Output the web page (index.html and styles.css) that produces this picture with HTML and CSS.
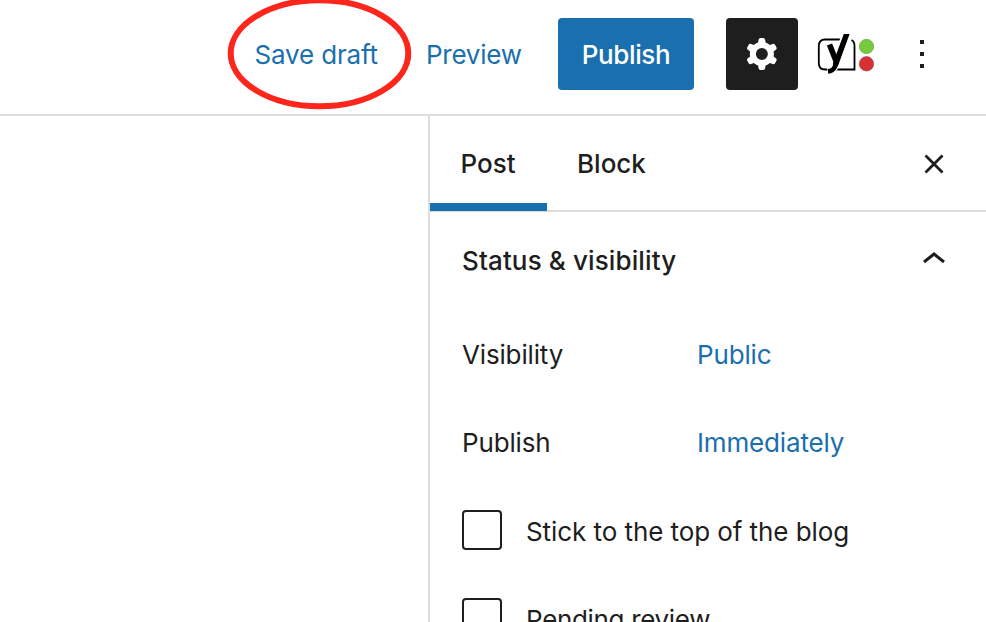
FILE: index.html
```html
<!DOCTYPE html>
<html lang="en">
<head>
<meta charset="utf-8">
<title>Edit post</title>
<link rel="stylesheet" href="styles.css">
</head>
<body>
<div class="editor">
  <header class="toolbar">
    <a class="link save">Save draft
      <svg class="highlight" width="186" height="112" viewBox="0 0 186 112"><ellipse cx="92.500" cy="55.300" rx="88.800" ry="53"/></svg>
    </a>
    <a class="link preview">Preview</a>
    <button class="publish">Publish</button>
    <button class="settings" aria-label="Settings">
      <svg width="48" height="48" viewBox="0 0 24 24"><path fill="#fff" fill-rule="evenodd" d="M10.289 4.836A1 1 0 0111.275 4h1.306a1 1 0 01.987.836l.244 1.466c.787.26 1.503.679 2.108 1.218l1.393-.522a1 1 0 011.216.437l.653 1.13a1 1 0 01-.23 1.273l-1.148.944a6.025 6.025 0 010 2.435l1.149.946a1 1 0 01.23 1.272l-.653 1.13a1 1 0 01-1.216.437l-1.394-.522c-.605.54-1.32.958-2.108 1.218l-.244 1.466a1 1 0 01-.987.836h-1.306a1 1 0 01-.986-.836l-.244-1.466a5.995 5.995 0 01-2.108-1.218l-1.394.522a1 1 0 01-1.217-.436l-.653-1.131a1 1 0 01.23-1.272l1.149-.946a6.026 6.026 0 010-2.435l-1.148-.944a1 1 0 01-.23-1.272l.653-1.131a1 1 0 011.217-.437l1.393.522a5.994 5.994 0 012.108-1.218l.244-1.466zM14.929 12a3 3 0 11-6 0 3 3 0 016 0z"/></svg>
    </button>
    <svg class="seo" width="60" height="44" viewBox="0 0 60 44">
      <path d="M25 7.500H9Q2.800 7.500 2.800 14V31Q2.800 37.500 9 37.500H38.500V14Q38.500 9.500 35.500 8" fill="none" stroke="#000" stroke-width="1.800"/>
      <path d="M30 2L19 33Q17.500 38.500 11.500 39" fill="none" stroke="#fff" stroke-width="8"/>
      <path d="M13.500 12.500L20 29" fill="none" stroke="#000" stroke-width="5.600"/>
      <path d="M27.800 2H33.600L22.500 32.500C20.200 38.500 17.400 41.600 12 41.600V37C15.500 36.800 17.300 34.500 17 31Z" fill="#000"/>
      <circle cx="50.500" cy="14.500" r="7.200" fill="#77ca3d" stroke="#629b40" stroke-width=".6"/>
      <circle cx="50.500" cy="31.800" r="7.200" fill="#d83135" stroke="#a9393b" stroke-width=".6"/>
    </svg>
    <svg class="more" width="6" height="30" viewBox="0 0 6 30" fill="#1e1e1e"><path d="M1 1h4v4H1zM1 13h4v4H1zM1 25h4v4H1z"/></svg>
  </header>
  <div class="body">
    <main class="canvas"></main>
    <aside class="sidebar">
      <nav class="tabs">
        <a class="tab active">Post</a>
        <a class="tab block">Block</a>
        <svg class="close" width="22" height="22" viewBox="0 0 22 22"><path d="M2.500 2.500L19.500 19.500M19.500 2.500L2.500 19.500"/></svg>
      </nav>
      <section class="panel">
        <h2 class="title"><span class="title-text">Status &amp; visibility</span>
          <svg class="chevron" width="24" height="14" viewBox="0 0 24 14"><path d="M2 11L12 3L22 11"/></svg>
        </h2>
        <div class="row"><span class="label visibility">Visibility</span><a class="link public">Public</a></div>
        <div class="row"><span class="label">Publish</span><a class="link immediately">Immediately</a></div>
        <label class="check"><span class="box"></span><span class="check-text">Stick to the top of the blog</span></label>
        <label class="check"><span class="box"></span><span class="check-text pending">Pending review</span></label>
      </section>
    </aside>
  </div>
</div>
</body>
</html>
```
FILE: styles.css
```css
* { box-sizing: border-box; }
body { margin: 0; background: #fff; color: #1e1e1e; font: 26px/36px Inter, "Liberation Sans", sans-serif; letter-spacing: -.16px; overflow: hidden; }
button { font: inherit; border: 0; padding: 0; border-radius: 4px; }
svg { display: block; flex: none; }
.editor { height: 622px; display: flex; flex-direction: column; overflow: hidden; }
.link { color: #1a6fae; white-space: nowrap; }
.toolbar { flex: none; height: 116px; padding: 18px 0 24px 254.500px; border-bottom: 2px solid #ddd; display: flex; align-items: center; }
.save { position: relative; width: 171.500px; padding-top: 2px; }
.highlight { position: absolute; left: -28px; top: -37px; fill: none; stroke: #fd261d; stroke-width: 6; }
.preview { width: 132px; padding-top: 2px; letter-spacing: -.25px; }
.publish { width: 136px; height: 72px; padding-top: 2px; background: #1a6fae; color: #fff; font-weight: 500; letter-spacing: -.4px; }
.settings { width: 72px; height: 72px; margin-left: 32px; background: #1e1e1e; display: grid; place-items: center; }
.seo { margin-left: 18px; }
.more { margin-left: 43px; }
.body { flex: 1; min-height: 0; display: flex; }
.canvas { flex: 1; }
.sidebar { width: 558px; border-left: 2px solid #ddd; overflow: hidden; }
.tabs { height: 96px; display: flex; align-items: center; border-bottom: 2px solid #ddd; padding-right: 41px; }
.tab { height: 95px; padding: 30px 30px 0; font-weight: 500; align-self: flex-start; letter-spacing: 0; }
.active { width: 117px; padding-left: 30.500px; border-bottom: 8px solid #1a6fae; }
.close { margin-left: auto; margin-top: 2px; fill: none; stroke: #1e1e1e; stroke-width: 2.8; }
.panel { padding: 31px 40px 0 32px; }
.title { margin: 0 0 58px; font-size: 26px; font-weight: 500; letter-spacing: .12px; height: 36px; display: flex; justify-content: space-between; align-items: center; }
.chevron { stroke: #1e1e1e; stroke-width: 3; fill: none; margin-top: -6px; }
.row { display: flex; height: 36px; margin-bottom: 52px; }
.label { width: 235px; }
.check { display: flex; align-items: center; gap: 24px; height: 40px; margin-bottom: 48px; white-space: nowrap; }
.row + .check { margin-top: -3px; }
.check-text { padding-top: 4px; letter-spacing: -.07px; }
.pending { letter-spacing: -.33px; }
.box { width: 40px; height: 40px; border: 2px solid #1e1e1e; border-radius: 4px; }
```
